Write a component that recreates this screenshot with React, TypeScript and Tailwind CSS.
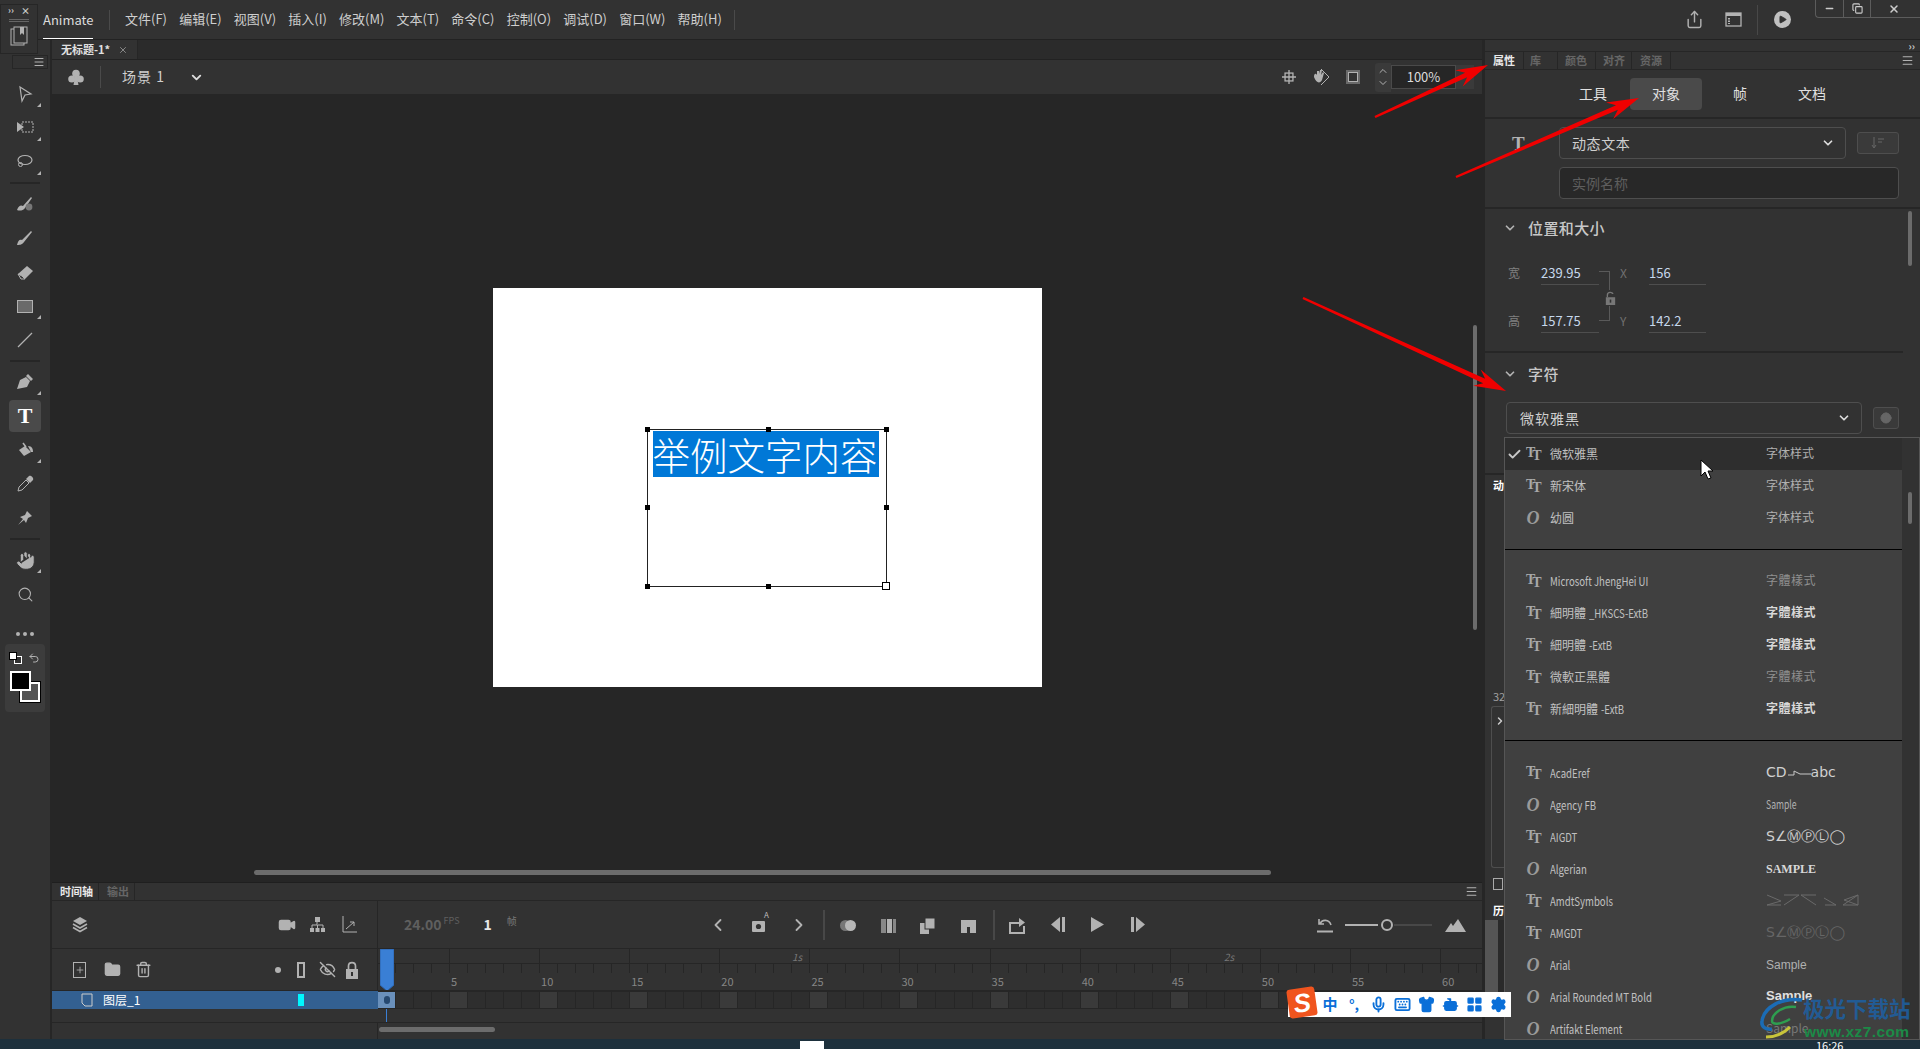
import React from "react";
import { Mic, Keyboard, Shirt, Bot, LayoutGrid, Settings, ChevronDown, ChevronUp, ChevronLeft, ChevronRight, Check, Plus, Trash2, Folder, Video, EyeOff, Play, Undo2, Globe, Share, Menu, Search, Hand, Minus, X, Copy } from "lucide-react";

const FONT = '"Noto Sans CJK SC", "Noto Sans", sans-serif';
const G = "#b2b2b2";

const Corner = () => (
  <span className="absolute right-[-7px] bottom-[-4px] w-0 h-0 border-l-[4px] border-l-transparent border-b-[4px] border-b-[#b2b2b2]" />
);

const Tool = ({ children, corner, active }: { children: React.ReactNode; corner?: boolean; active?: boolean }) => (
  <div className="w-[32px] h-[34px] flex items-center justify-center">
    <div className={`relative w-[32px] h-[32px] flex items-center justify-center rounded-[4px] ${active ? "bg-[#4a4a4a]" : ""}`}>
      <div className="relative w-[18px] h-[18px] flex items-center justify-center">
        {children}
        {corner && <Corner />}
      </div>
    </div>
  </div>
);

const S = ({ children, w = 18 }: { children: React.ReactNode; w?: number }) => (
  <svg width={w} height={w} viewBox="0 0 18 18" fill={G} stroke="none">{children}</svg>
);

const LockIcon = ({ c = G, open, w = 14, h = 18 }: { c?: string; open?: boolean; w?: number; h?: number }) => (
  <svg width={w} height={h} viewBox="0 0 14 18">
    <path d={open ? "M3 8 V5 C3 1 10 1 10 4" : "M3.5 8 V5 C3.5 0.5 10.5 0.5 10.5 5 V8"} fill="none" stroke={c} strokeWidth="1.7" />
    <rect x="1" y="8" width="12" height="10" fill={c} />
    <rect x="6" y="11" width="2" height="4" fill="#323232" />
  </svg>
);

const Divider = () => <div className="w-[30px] h-[2px] bg-[#262626] my-[3px]" />;

const Toolbar = () => (
  <div className="relative w-[50px] flex-none bg-[#323232] flex flex-col items-center pt-[21px]">
    <div className="absolute left-[12px] top-[15px] w-[36px] h-[14px] border border-[#262626] flex items-center justify-end pr-[2px]">
      <Menu size={12} color={G} />
    </div>
    <div className="mt-[16px]" />
    <Tool corner><S><path d="M4 2 L15 9 L9 10 L6 16 Z" fill="none" stroke={G} strokeWidth="1.2" /></S></Tool>
    <Tool corner><S w={22}><path d="M1 3 L8 8 L1 13 Z" /><rect x="6" y="3" width="11" height="10" fill="none" stroke={G} strokeDasharray="2 1" /></S></Tool>
    <Tool corner><S w={20}><ellipse cx="9" cy="7" rx="7" ry="4.5" fill="none" stroke={G} strokeWidth="1.2" /><circle cx="4.5" cy="11.5" r="2" fill="none" stroke={G} /></S></Tool>
    <Divider />
    <Tool><S w={20}><path d="M1 15 C3 10 5 10 7 11 L15 2 L16 3 L9 13 C7 16 3 16 1 15 Z" /><circle cx="13" cy="12" r="3.4" fill="#777" /></S></Tool>
    <Tool><S><path d="M1 16 C2 11 4 10 6 11 L15 2 L16 3 L8 13 C6 16 3 16 1 16 Z" /></S></Tool>
    <Tool><S w={20}><path d="M2 11 L11 3 L17 8 L9 16 L5 16 Z" /><path d="M2 11 L5 16 L9 16 L6 13 Z" fill="#3a3a3a" stroke={G} /></S></Tool>
    <Tool corner><div className="w-[16px] h-[13px] flex-none bg-[#6a6a6a] border border-[#b2b2b2]" /></Tool>
    <Tool><S><path d="M2 16 L16 2" stroke={G} strokeWidth="1.2" /></S></Tool>
    <Divider />
    <Tool corner><S><path d="M1 16 L4 7 L10 4 L14 8 L11 14 Z M10 3 L12 1 L17 6 L15 8 Z" /></S></Tool>
    <Tool active><span className="text-[22px] leading-none font-bold text-white" style={{ fontFamily: '"Liberation Serif", serif' }}>T</span></Tool>
    <Tool corner><S w={20}><path d="M3 9 L9 5 L15 11 L8 15 Z" /><path d="M7 2 L10 6" stroke={G} strokeWidth="1.5" /><path d="M12 5 C16 5 17 8 17 11 L15 11 Z" /></S></Tool>
    <Tool><S><path d="M2 16 L3 12 L10 5 L13 8 L6 15 Z" fill="none" stroke={G} /><path d="M10 4 L13 1 C15 0 18 3 17 5 L14 8 Z" /></S></Tool>
    <Tool><S><path d="M2 16 L7 10 L4 8 L9 6 L11 2 L16 7 L12 9 L10 14 L8 11 Z" /></S></Tool>
    <Divider />
    <Tool corner><Hand size={21} color="#323232" fill={G} strokeWidth={1.1} className="flex-none" /></Tool>
    <Tool><Search size={17} color={G} strokeWidth={1.5} /></Tool>
    <div className="flex gap-[3px] mt-[21px] mb-[8px]">
      <span className="w-[4px] h-[4px] rounded-full bg-[#b2b2b2]" />
      <span className="w-[4px] h-[4px] rounded-full bg-[#b2b2b2]" />
      <span className="w-[4px] h-[4px] rounded-full bg-[#b2b2b2]" />
    </div>
    <div className="relative w-[40px] h-[68px] rounded-[4px] bg-[#3c3c3c]">
      <span className="absolute left-[4px] top-[8px] w-[8px] h-[8px] bg-white border border-black z-10" />
      <span className="absolute left-[9px] top-[12px] w-[8px] h-[8px] bg-[#333] border border-white" />
      <Undo2 size={12} color={G} className="absolute right-[5px] top-[8px]" />
      <span className="absolute left-[15px] top-[38px] w-[20px] h-[20px] bg-[#555] border-2 border-white outline outline-1 outline-black" />
      <span className="absolute left-[5px] top-[27px] w-[21px] h-[20px] bg-black border-2 border-white z-10" />
    </div>
  </div>
);

const MENU = ["文件(F)", "编辑(E)", "视图(V)", "插入(I)", "修改(M)", "文本(T)", "命令(C)", "控制(O)", "调试(D)", "窗口(W)", "帮助(H)"];

const Header = () => (
  <div className="relative h-[40px] flex-none bg-[#323232] border-b border-[#222] flex items-center text-[13px] text-[#cfcfcf]">
    <div className="absolute left-0 top-[4px] w-[38px] h-[50px] bg-[#323232] border border-[#262626] z-20 flex flex-col items-center">
      <div className="w-full h-[10px] flex items-center justify-between px-[7px] text-[9px] leading-none text-[#ccc] font-bold"><span>››</span><span>×</span></div>
      <div className="w-[20px] h-[3px] mt-[4px] border-y border-[#666]" />
      <svg width="18" height="20" viewBox="0 0 18 20" className="mt-[4px]"><rect x="1" y="3" width="13" height="16" fill="none" stroke={G} /><rect x="4" y="1" width="13" height="16" fill="#323232" stroke={G} /><path d="M10 1 H14 V9 L12 7 L10 9 Z" fill={G} /></svg>
    </div>
    <div className="ml-[43px] h-full flex items-center w-[50px] border-b-[1px] border-white text-[13px] text-[#dcdcdc] pt-[2px]">Animate</div>
    <div className="ml-[16px] w-px h-[20px] bg-[#4a4a4a]" />
    <div className="ml-[15px] flex gap-[12.2px] whitespace-nowrap -mt-[2px]">
      {MENU.map((m) => <span key={m}>{m}</span>)}
    </div>
    <div className="ml-[12px] w-px h-[20px] bg-[#4a4a4a]" />
    <div className="ml-auto flex items-center mr-[129px]">
      <Share size={19} color={G} strokeWidth={1.8} />
      <svg width="17" height="15" viewBox="0 0 17 15" className="ml-[21px]"><rect x="1" y="1" width="15" height="13" fill="none" stroke={G} strokeWidth="1.3" /><rect x="1" y="1" width="15" height="3" fill={G} /><path d="M4 6 V12" stroke={G} strokeWidth="2" strokeDasharray="1.5 1" /></svg>
      <div className="ml-[15px] w-px h-[30px] bg-[#484848]" />
      <div className="ml-[16px] w-[17px] h-[17px] rounded-full bg-[#c0c0c0] flex items-center justify-center"><Play size={9} color="#323232" fill="#323232" /></div>
    </div>
    <div className="absolute right-0 top-0 w-[105px] h-[18px] border border-t-0 border-r-0 border-[#5c5c5c] rounded-bl-[4px] flex items-center">
      <div className="w-[28px] h-full border-r border-[#5c5c5c] flex items-center justify-center"><Minus size={11} color="#ccc" strokeWidth={3} /></div>
      <div className="w-[27px] h-full border-r border-[#5c5c5c] flex items-center justify-center"><Copy size={11} color="#ccc" strokeWidth={2.4} /></div>
      <div className="flex-1 flex items-center justify-center pr-[4px]"><X size={12} color="#ccc" strokeWidth={3} /></div>
    </div>
  </div>
);

const SceneBar = () => (
  <div className="h-[34px] flex-none bg-[#323232] flex items-center text-[#cfcfcf] relative z-0">
    <svg width="16" height="17" viewBox="0 0 16 17" className="ml-[16px]" fill={G}><circle cx="8" cy="4.5" r="3.8" /><circle cx="3.8" cy="10" r="3.6" /><circle cx="12.2" cy="10" r="3.6" /><path d="M7 8 H9 L10.5 16 H5.5 Z" /></svg>
    <div className="ml-[16px] w-px h-[22px] bg-[#4a4a4a]" />
    <span className="ml-[21px] text-[14px] tracking-[1px] -mt-[2px]">场景 1</span>
    <ChevronDown size={15} color="#ddd" strokeWidth={3} className="ml-[24px]" />
    <div className="ml-auto flex items-center">
      <svg width="14" height="14" viewBox="0 0 16 16"><rect x="3.5" y="3.5" width="9" height="9" fill="none" stroke={G} strokeWidth="1.5" /><path d="M8 0 V16 M0 8 H16" stroke={G} strokeWidth="1.5" /></svg>
      <svg width="18" height="18" viewBox="0 0 18 18" className="ml-[16px]"><path d="M9 1 L17 9 L9 17" fill="none" stroke={G} /><path d="M2 9 C2 5 4 5 5 7 L5 3 L7 3 L7 6 L8 2 L10 2 L9 7 L11 4 L12 5 L10 12 C8 16 4 15 2 9 Z" fill={G} /></svg>
      <div className="ml-[16px] w-[14px] h-[14px] bg-[#6a6a6a] p-[2px]"><div className="w-full h-full bg-[#323232] border border-[#b2b2b2]" /></div>
      <div className="ml-[15px] w-[16px] h-[29px] bg-[#3a3a3a] flex flex-col items-center justify-center rounded-l-[3px]">
        <ChevronUp size={12} color={G} /><ChevronDown size={12} color={G} />
      </div>
      <div className="w-[65px] h-[24px] bg-[#262626] border border-[#4a4a4a] flex items-center justify-center text-[13px] text-[#dcdcdc]">100%</div>
      <div className="w-[18px] h-[24px] bg-[#3a3a3a] mr-[10px]" />
    </div>
  </div>
);

const Canvas = () => (
  <div className="relative flex-1 min-h-0 bg-[#262626] flex items-center justify-center pb-[2px] pr-[2px]">
    <div className="relative w-[549px] h-[399px] bg-white">
      <div className="absolute left-[154px] top-[141px] w-[240px] h-[158px] border border-[#222]">
        <div className="ml-[5px] mt-[1px] w-[226px] h-[46px] bg-[#0078d7] text-white text-[37.5px] leading-[46px] whitespace-nowrap" style={{ fontWeight: 300 }}>举例文字内容</div>
        {[["-3px", "-3px"], ["118px", "-3px"], ["236px", "-3px"], ["-3px", "75px"], ["236px", "75px"], ["-3px", "154px"], ["118px", "154px"]].map(([l, t], i) => (
          <span key={i} className="absolute w-[5px] h-[5px] bg-black" style={{ left: l, top: t }} />
        ))}
        <span className="absolute left-[234px] top-[152px] w-[8px] h-[8px] bg-white border border-black" />
      </div>
    </div>
    <div className="absolute left-[202px] top-[776px] w-[1017px] h-[5px] rounded-full bg-[#6c6c6c]" />
    <div className="absolute left-[1421px] top-[231px] w-[4px] h-[305px] rounded-full bg-[#6c6c6c]" />
  </div>
);

const CELL = "w-[18.02px] flex-none";
const frames = Array.from({ length: 62 }, (_, i) => i);
const labels = Array.from({ length: 12 }, (_, i) => (i + 1) * 5);

const Timeline = () => (
  <div className="h-[157px] flex-none bg-[#323232] flex flex-col border-t border-[#1f1f1f] text-[#b2b2b2]">
    <div className="h-[18px] flex-none flex items-stretch border-b border-[#262626] text-[11px] font-bold">
      <div className="w-[47px] flex items-center pl-[8px] text-[#e8e8e8] border-r border-[#262626] bg-[#323232]">时间轴</div>
      <div className="w-[36px] flex items-center pl-[8px] text-[#666] border-r border-[#262626]">输出</div>
      <div className="ml-auto mr-[6px] flex items-center"><Menu size={13} color={G} /></div>
    </div>
    <div className="h-[48px] flex-none flex border-b border-[#262626]">
      <div className="w-[326px] flex-none flex items-center border-r border-[#262626]">
        <svg width="16" height="18" viewBox="0 0 16 18" className="ml-[20px]" fill={G}><path d="M8 1 L15 5 L8 9 L1 5 Z" /><path d="M1 8 L8 12 L15 8 M1 11.5 L8 15.5 L15 11.5" fill="none" stroke={G} strokeWidth="1.6" /></svg>
        <Video size={18} color={G} fill={G} className="ml-[190px]" />
        <svg width="15" height="16" viewBox="0 0 15 16" className="ml-[14px]" fill={G}><rect x="5" y="0" width="5" height="5" /><rect x="0" y="11" width="4" height="4" /><rect x="5.5" y="11" width="4" height="4" /><rect x="11" y="11" width="4" height="4" /><path d="M7 5 V8 H2 V11 M7.5 8 V11 M8 8 H13 V11" fill="none" stroke={G} /></svg>
        <svg width="15" height="17" viewBox="0 0 15 17" className="ml-[17px]"><path d="M1 0 V16 H15" fill="none" stroke={G} /><path d="M4 13 L12 6 M8 6 H12 V10" fill="none" stroke={G} /></svg>
      </div>
      <div className="flex-1 flex items-center relative">
        <span className="ml-[26px] text-[14px] text-[#5f5f5f] font-bold">24.00</span>
        <span className="ml-[2px] -mt-[8px] text-[9px] text-[#5f5f5f]">FPS</span>
        <span className="ml-[24px] text-[14px] font-bold text-[#e8e8e8]">1</span>
        <span className="ml-[15px] -mt-[9px] text-[10px] text-[#777]">帧</span>
        <ChevronLeft size={20} color={G} strokeWidth={2.2} className="absolute left-[330px]" />
        <svg width="16" height="17" viewBox="0 0 16 17" className="absolute left-[374px]" fill={G}><rect x="0" y="5" width="13" height="11" rx="1" /><circle cx="6.5" cy="10.5" r="2.6" fill="#323232" /></svg>
        <span className="absolute left-[386px] top-[10px] text-[8px] leading-none text-[#bbb]">A</span>
        <ChevronRight size={20} color={G} strokeWidth={2.2} className="absolute left-[411px]" />
        <div className="absolute left-[445px] top-[9px] w-[2px] h-[30px] bg-[#484848]" />
        <div className="absolute left-[462px] top-[19px] w-[16px] h-[11px]"><span className="absolute left-0 top-0 w-[11px] h-[11px] rounded-full bg-[#777]" /><span className="absolute left-[5px] top-0 w-[11px] h-[11px] rounded-full bg-[#b8b8b8]" /></div>
        <div className="absolute left-[503px] top-[18px] w-[15px] h-[14px] flex gap-[1px]"><span className="w-[5px] bg-[#888]" /><span className="w-[5px] bg-[#b2b2b2]" /><span className="w-[3px] bg-[#888]" /></div>
        <svg width="15" height="16" viewBox="0 0 15 16" className="absolute left-[542px] top-[17px]" fill={G}><rect x="0" y="5" width="9" height="11" /><rect x="5" y="0" width="10" height="11" stroke="#323232" /></svg>
        <svg width="15" height="13" viewBox="0 0 15 13" className="absolute left-[583px] top-[19px]"><path d="M0 0 H15 V13 H9 V7 H6 V13 H0 Z" fill={G} /></svg>
        <div className="absolute left-[615px] top-[9px] w-[2px] h-[30px] bg-[#484848]" />
        <svg width="17" height="16" viewBox="0 0 17 16" className="absolute left-[631px] top-[17px]"><path d="M1 4 V15 H15 V8 M1 5 H10" fill="none" stroke={G} strokeWidth="2" /><path d="M10 0 L16 4.5 L10 9 Z" fill={G} /></svg>
        <svg width="15" height="15" viewBox="0 0 15 15" className="absolute left-[673px] top-[16px]" fill={G}><path d="M9 0 V15 L0 7.5 Z" /><rect x="11" y="0" width="3" height="15" /></svg>
        <svg width="13" height="15" viewBox="0 0 13 15" className="absolute left-[713px] top-[16px]" fill={G}><path d="M0 0 L13 7.5 L0 15 Z" /></svg>
        <svg width="15" height="15" viewBox="0 0 15 15" className="absolute left-[752px] top-[16px]" fill={G}><rect x="1" y="0" width="3" height="15" /><path d="M6 0 L15 7.5 L6 15 Z" /></svg>
        <svg width="16" height="15" viewBox="0 0 16 15" className="absolute left-[939px] top-[17px]"><path d="M3 6 C5 1 12 1 14 7 M2 1 V6 H7" fill="none" stroke={G} strokeWidth="1.6" /><path d="M0 13.5 H16" stroke={G} strokeWidth="2" /></svg>
        <div className="absolute left-[967px] top-[23px] w-[33px] h-[2px] bg-[#b2b2b2]" />
        <div className="absolute left-[1003px] top-[18px] w-[12px] h-[12px] rounded-full border-2 border-[#b2b2b2]" />
        <div className="absolute left-[1016px] top-[23px] w-[38px] h-[2px] bg-[#484848]" />
        <svg width="21" height="13" viewBox="0 0 21 13" className="absolute left-[1067px] top-[18px]" fill={G}><path d="M0 13 L6 4 L8 7 L13 0 L21 13 Z" /></svg>
      </div>
    </div>
    <div className="h-[42px] flex-none flex border-b border-[#262626]">
      <div className="w-[326px] flex-none flex items-center border-r border-[#262626]">
        <div className="ml-[21px] w-[13px] h-[16px] border border-[#b2b2b2] flex items-center justify-center"><Plus size={10} color={G} /></div>
        <Folder size={17} color={G} fill={G} className="ml-[18px]" />
        <Trash2 size={17} color={G} className="ml-[14px]" />
        <span className="ml-[123px] w-[6px] h-[6px] rounded-full bg-[#b2b2b2]" />
        <span className="ml-[16px] w-[8px] h-[16px] border-2 border-[#b2b2b2]" />
        <EyeOff size={17} color={G} className="ml-[14px]" />
        <span className="ml-[9px] flex"><LockIcon /></span>
      </div>
      <div className="flex-1 min-w-0 overflow-hidden relative">
        <div className="h-[15px] flex border-b border-[#262626]">
          <div className="w-[71px] flex-none" />
          {labels.map((n) => (
            <div key={n} className="w-[90.1px] flex-none border-l border-[#262626]" />
          ))}
          <span className="absolute left-[414px] top-0 text-[10px] italic leading-[15px] text-[#777]">1s</span>
          <span className="absolute left-[846px] top-0 text-[10px] italic leading-[15px] text-[#777]">2s</span>
        </div>
        <div className="h-[9px] flex">
          {frames.map((i) => <div key={i} className={`${CELL} border-r border-[#262626]`} />)}
        </div>
        <div className="h-[17px] flex text-[11px] leading-[17px] text-[#858585]">
          <div className="w-[71px] flex-none" />
          {labels.map((n) => <div key={n} className="w-[90.1px] flex-none pl-[2px]">{n}</div>)}
        </div>
        <svg width="14" height="42" viewBox="0 0 14 42" className="absolute left-[2px] top-0"><path d="M0 0 H14 V36 L7 42 L0 36 Z" fill="#3a7fd5" stroke="#2c62a8" /></svg>
      </div>
    </div>
    <div className="h-[18px] flex-none flex">
      <div className="w-[326px] flex-none bg-[#336091] flex items-center text-[12px] text-white relative">
        <svg width="12" height="14" viewBox="0 0 12 14" className="ml-[29px]"><path d="M1 1 H11 V13 H4 L1 10 Z" fill="none" stroke="#ccc" /></svg>
        <span className="ml-[10px]">图层_1</span>
        <span className="absolute left-[246px] top-[3px] w-[6px] h-[12px] bg-[#00f7ff]" />
      </div>
      <div className="flex-1 min-w-0 flex overflow-hidden bg-[#2e2e2e] border-y border-[#262626]">
        {frames.map((i) => (
          <div key={i} className={`${CELL} border-r border-[#262626] ${i === 0 ? "bg-[#6a90bb] flex items-center justify-center" : (i + 1) % 5 === 0 ? "bg-[#3a3a3a]" : ""}`}>
            {i === 0 && <span className="w-[6px] h-[8px] rounded-full bg-[#26486f]" />}
          </div>
        ))}
      </div>
    </div>
    <div className="h-[14px] flex-none border-b border-[#262626] flex">
      <div className="ml-[334px] w-px h-full bg-[#3a7fd5]" />
    </div>
    <div className="flex-1 flex">
      <div className="w-[326px] flex-none border-r border-[#262626]" />
      <div className="mt-[4px] ml-px w-[116px] h-[5px] rounded-full bg-[#6c6c6c]" />
    </div>
  </div>
);

const Sec = ({ title }: { title: string }) => (
  <div className="flex items-center text-[15px] text-[#c8c8c8] font-medium leading-none">
    <ChevronDown size={14} color={G} strokeWidth={3} className="ml-[18px]" />
    <span className="ml-[11px] tracking-[0.4px]">{title}</span>
  </div>
);

const Field = ({ label, value }: { label: string; value: string }) => (
  <div className="flex items-center h-[16px]">
    <span className="w-[34px] pl-[1px] text-[12px] text-[#808080] translate-y-[4px]">{label}</span>
    <span className="w-[58px] text-[13px] text-[#c6d8ec] border-b border-[#4e4e4e] h-[24px] leading-[24px] translate-y-[4px]">{value}</span>
  </div>
);

const Serif = '"Liberation Serif", serif';
const IconT = () => (
  <span className="flex w-[14px] text-[#a8a8a8] text-[14px] leading-none font-bold" style={{ fontFamily: Serif }}><span>T</span><span className="-ml-[3px] mt-[3px]">T</span></span>
);
const IconO = () => (
  <span className="block w-[14px] text-center text-[#9a9a9a] text-[18px] leading-none italic font-bold" style={{ fontFamily: Serif }}>O</span>
);

const TC = '"Noto Sans CJK TC", sans-serif';
const DV = '"DejaVu Sans", sans-serif';
const L = ({ children }: { children: React.ReactNode }) => (
  <span className="inline-block origin-left scale-x-[0.8] text-[12px]">{children}</span>
);
const Row = ({ t, name, sample, check, hi }: { t: "T" | "O"; name: React.ReactNode; sample: React.ReactNode; check?: boolean; hi?: boolean }) => (
  <div className={`h-[32px] flex-none flex items-center text-[12px] text-[#c0c0c0] relative ${hi ? "bg-[#2e2e2e]" : ""}`}>
    {check && <Check size={15} color="#c8c8c8" strokeWidth={3} className="absolute left-[2px]" />}
    <div className="ml-[21px] w-[24px]">{t === "T" ? <IconT /> : <IconO />}</div>
    <div className="w-[216px] whitespace-nowrap">{name}</div>
    <div className="whitespace-nowrap text-[#b0b0b0] -translate-y-[1px]">{sample}</div>
  </div>
);

const Tw = ({ children, b }: { children: React.ReactNode; b?: boolean }) => (
  <span className={`text-[12px] tracking-[0.5px] ${b ? "font-bold text-[#d8d8d8]" : "text-[#8f8f8f]"}`} style={{ fontFamily: TC }}>{children}</span>
);
const Sym = ({ dim }: { dim?: boolean }) => (
  <span className={`text-[14px] ${dim ? "text-[#666]" : "text-[#d0d0d0]"}`} style={{ fontFamily: DV }}>S∠ⓂⓅⓁ◯</span>
);

const Dropdown = () => (
  <div className="absolute left-[19px] top-[397px] w-[416px] h-[603px] overflow-hidden bg-[#323232] border border-[#565656] flex z-10">
    <div className="w-[397px] flex-none bg-[#404040] flex flex-col" style={{ fontFamily: FONT }}>
      <Row t="T" hi check name="微软雅黑" sample="字体样式" />
      <Row t="T" name="新宋体" sample="字体样式" />
      <Row t="O" name="幼圆" sample="字体样式" />
      <div className="mt-[15px] h-px bg-black flex-none" />
      <div className="h-[15px] flex-none" />
      <Row t="T" name={<L>Microsoft JhengHei UI</L>} sample={<Tw>字體樣式</Tw>} />
      <Row t="T" name={<>細明體 <L>_HKSCS-ExtB</L></>} sample={<Tw b>字體樣式</Tw>} />
      <Row t="T" name={<>細明體 <L>-ExtB</L></>} sample={<Tw b>字體樣式</Tw>} />
      <Row t="T" name="微軟正黑體" sample={<Tw>字體樣式</Tw>} />
      <Row t="T" name={<>新細明體 <L>-ExtB</L></>} sample={<Tw b>字體樣式</Tw>} />
      <div className="mt-[15px] h-px bg-black flex-none" />
      <div className="h-[16px] flex-none" />
      <Row t="T" name={<L>AcadEref</L>} sample={<span className="text-[14px] text-[#d0d0d0] flex items-center" style={{ fontFamily: DV }}>CD<svg width="24" height="10" viewBox="0 0 24 10"><path d="M1 8 H7 V4 L13 7 H24" fill="none" stroke="#c8c8c8" /></svg>abc</span>} />
      <Row t="O" name={<L>Agency FB</L>} sample={<span className="inline-block origin-left scale-x-[0.72] text-[12px]">Sample</span>} />
      <Row t="T" name={<L>AIGDT</L>} sample={<Sym />} />
      <Row t="O" name={<L>Algerian</L>} sample={<span className="text-[12px] font-bold text-[#d8d8d8]" style={{ fontFamily: Serif }}>SAMPLE</span>} />
      <Row t="T" name={<L>AmdtSymbols</L>} sample={<svg width="94" height="12" viewBox="0 0 94 12" fill="none" stroke="#6a6a6a"><path d="M1 1 L15 7 L1 11 H15 M18 11 L33 1 H18 M50 1 H35 L50 11 M59 11 H70 L58 4 M77 11 L92 1 M92 11 L77 11 M92 1 V11 L78 6 L92 1" /></svg>} />
      <Row t="T" name={<L>AMGDT</L>} sample={<Sym dim />} />
      <Row t="O" name={<L>Arial</L>} sample={<span className="text-[12px]" style={{ fontFamily: '"Liberation Sans", sans-serif' }}>Sample</span>} />
      <Row t="O" name={<L>Arial Rounded MT Bold</L>} sample={<span className="text-[13px] font-bold text-[#e0e0e0]" style={{ fontFamily: '"Liberation Sans", sans-serif' }}>Sample</span>} />
      <Row t="O" name={<L>Artifakt Element</L>} sample={<span className="text-[12px] text-[#777]">Sample</span>} />
    </div>
    <div className="flex-1 relative">
      <div className="absolute left-[6px] top-[54px] w-[4px] h-[32px] rounded-full bg-[#6c6c6c]" />
    </div>
  </div>
);

const RightPanel = () => (
  <div className="relative w-[438px] flex-none bg-[#323232] border-l-[3px] border-[#262626] -ml-[2px] flex flex-col text-[#cfcfcf]">
    <div className="h-[12px] flex-none border-b border-[#262626] flex items-center justify-end pr-[5px] text-[10px] leading-none text-[#ccc] font-bold">››</div>
    <div className="h-[18px] flex-none flex items-stretch border-b border-[#262626] text-[11px] font-bold text-[#666] relative">
      <div className="w-[39px] pl-[8px] flex items-center text-[#e8e8e8] border-r border-[#262626]">属性</div>
      <div className="w-[34px] pl-[6px] flex items-center border-r border-[#262626]">库</div>
      <div className="w-[38px] pl-[7px] flex items-center border-r border-[#262626]">颜色</div>
      <div className="w-[36px] pl-[7px] flex items-center border-r border-[#262626]">对齐</div>
      <div className="w-[39px] pl-[8px] flex items-center border-r border-[#262626]">资源</div>
      <div className="ml-auto mr-[6px] flex items-center"><Menu size={13} color={G} /></div>
    </div>
    <div className="h-[49px] flex-none flex items-center text-[14px] text-[#e0e0e0] border-b-2 border-[#262626]">
      <span className="ml-[94px] w-[51px]">工具</span>
      <span className="w-[72px] h-[32px] rounded-[4px] bg-[#4a4a4a] flex items-center justify-center">对象</span>
      <span className="ml-[31px] w-[14px]">帧</span>
      <span className="ml-[51px]">文档</span>
    </div>
    <div className="h-[90px] flex-none border-b-2 border-[#262626] flex flex-col">
      <div className="flex items-center mt-[8px]">
        <span className="ml-[27px] w-[47px] text-[19px] leading-none font-bold text-[#b2b2b2]" style={{ fontFamily: Serif }}>T</span>
        <div className="w-[287px] h-[32px] rounded-[4px] border border-[#4e4e4e] flex items-center pl-[12px] text-[14px] tracking-[0.6px]">
          动态文本
          <ChevronDown size={14} color="#ddd" strokeWidth={3} className="ml-auto mr-[10px]" />
        </div>
        <div className="ml-[11px] w-[42px] h-[22px] rounded-[3px] border border-[#4e4e4e] bg-[#3a3a3a] flex items-center justify-center"><svg width="14" height="12" viewBox="0 0 14 12"><path d="M3 0 V10 M1 8 L3 11 L5 8 M7 2 H13 M7 5 H11" fill="none" stroke="#666" /></svg></div>
      </div>
      <div className="ml-[74px] mt-[8px] w-[340px] h-[32px] rounded-[4px] border border-[#4e4e4e] bg-[#282828] flex items-center pl-[12px] text-[14px] text-[#5e5e5e]">实例名称</div>
    </div>
    <div className="relative h-[144px] flex-none border-b-2 border-[#262626] w-[418px] flex flex-col pt-[11px]">
      <Sec title="位置和大小" />
      <div className="ml-[22px] mt-[26px] flex">
        <div className="flex flex-col gap-[32px]">
          <Field label="宽" value="239.95" />
          <Field label="高" value="157.75" />
        </div>
        <div className="w-[21px] relative flex flex-col items-start">
          <div className="w-[11px] h-[19px] mt-[10px] border-t border-r border-[#5a5a5a]" />
          <span className="ml-[6px] my-[1px] flex"><LockIcon c="#777" open w={11} h={14} /></span>
          <div className="w-[11px] h-[15px] border-b border-r border-[#5a5a5a]" />
        </div>
        <div className="flex flex-col gap-[32px]">
          <div className="flex items-center h-[16px]"><span className="w-[29px] text-[12px] text-[#707070] translate-y-[4px]">X</span><span className="w-[57px] h-[24px] leading-[24px] text-[13px] text-[#c6d8ec] border-b border-[#4e4e4e] translate-y-[4px]">156</span></div>
          <div className="flex items-center h-[16px]"><span className="w-[29px] text-[12px] text-[#707070] translate-y-[4px]">Y</span><span className="w-[57px] h-[24px] leading-[24px] text-[13px] text-[#c6d8ec] border-b border-[#4e4e4e] translate-y-[4px]">142.2</span></div>
        </div>
      </div>
    </div>
    <div className="h-[122px] flex-none border-b-[2px] border-[#262626] w-[418px] flex flex-col pt-[13px]">
      <Sec title="字符" />
      <div className="flex items-center mt-[21px] ml-[21px]">
        <div className="w-[356px] h-[32px] rounded-[4px] border border-[#4e4e4e] flex items-center pl-[13px] text-[14px] tracking-[1px]">
          微软雅黑
          <ChevronDown size={14} color="#ddd" strokeWidth={3} className="ml-auto mr-[10px]" />
        </div>
        <div className="ml-[11px] w-[26px] h-[22px] rounded-[3px] border border-[#4e4e4e] bg-[#3a3a3a] flex items-center justify-center"><Globe size={12} color="#666" fill="#666" /></div>
      </div>
    </div>
    <div className="flex-1 min-h-0 flex flex-col pl-[8px] text-[#c8c8c8] text-[11px]">
      <span className="mt-[2px] font-bold text-white">动</span>
      <span className="mt-[194px] text-[#a0a0a0]">32</span>
      <div className="mt-[2px] w-[14px] h-[162px] border border-r-0 border-[#4e4e4e] rounded-l-[3px] -ml-[2px] pt-[8px] pl-[2px]"><ChevronRight size={12} color="#ccc" strokeWidth={3} /></div>
      <div className="mt-[10px] w-[10px] h-[12px] border border-[#aaa]" />
      <span className="mt-[12px] font-bold text-white">历</span>
      <div className="-ml-[8px] mt-[1px] w-[19px] h-[76px] flex">
        <div className="w-[13px] h-full bg-[#555]" />
        <div className="w-[6px] h-full bg-[#2a2a2a]" />
      </div>
    </div>
    <div className="absolute right-[8px] top-[171px] w-[4px] h-[55px] rounded-full bg-[#6c6c6c]" />
    <Dropdown />
  </div>
);

const Arrow = ({ x1, y1, x2, y2 }: { x1: number; y1: number; x2: number; y2: number }) => {
  const dx = x2 - x1, dy = y2 - y1, Len = Math.hypot(dx, dy);
  const ux = dx / Len, uy = dy / Len, nx = -uy, ny = ux;
  const p = (a: number, b: number) => `${x1 + ux * a + nx * b},${y1 + uy * a + ny * b}`;
  return <polygon fill="#f00000" points={[p(0, 1.2), p(Len - 24, 2.4), p(Len - 32, 9), p(Len, 0), p(Len - 32, -9), p(Len - 24, -2.4), p(0, -1.2)].join(" ")} />;
};

const Overlays = () => (
  <>
    <svg width="1920" height="1049" className="absolute left-0 top-0 z-30 pointer-events-none" viewBox="0 0 1920 1049">
      <Arrow x1={1375} y1={117} x2={1488} y2={65} />
      <Arrow x1={1456} y1={177} x2={1639} y2={98} />
      <Arrow x1={1303} y1={298} x2={1506} y2={391} />
    </svg>
    <svg width="14" height="21" viewBox="0 0 14 21" className="absolute left-[1700px] top-[459px] z-30"><path d="M1 1 V17 L5 13 L8 20 L11 19 L8 12 L13 12 Z" fill="#fff" stroke="#000" /></svg>
    <div className="absolute left-[1288px] top-[992px] w-[223px] h-[25px] bg-white z-30 flex items-center pl-[30px] text-[#0a6fd8]" style={{ fontFamily: FONT }}>
      <div className="absolute left-[0px] top-[-4px] w-[28px] h-[29px] bg-[#f0541e] rounded-[3px] -rotate-[8deg] flex items-center justify-center text-white text-[26px] font-bold italic leading-none" style={{ fontFamily: '"Liberation Sans", sans-serif' }}>S</div>
      <span className="w-[24px] text-center text-[15px] font-bold">中</span>
      <span className="w-[24px] text-center text-[14px] font-bold">°,</span>
      <span className="w-[24px] flex justify-center"><Mic size={17} strokeWidth={2.6} /></span>
      <span className="w-[24px] flex justify-center"><Keyboard size={17} strokeWidth={2.6} /></span>
      <span className="w-[24px] flex justify-center"><Shirt size={17} fill="#0a6fd8" /></span>
      <span className="w-[24px] flex justify-center"><Bot size={17} fill="#0a6fd8" /></span>
      <span className="w-[24px] flex justify-center"><LayoutGrid size={17} fill="#0a6fd8" /></span>
      <span className="w-[24px] flex justify-center"><Settings size={17} fill="#0a6fd8" /></span>
    </div>
    <div className="absolute left-[1760px] top-[997px] z-30 flex items-start pointer-events-none">
      <svg width="44" height="42" viewBox="0 0 44 42" fill="none"><path d="M42 3 C22 0 4 10 2 24 C1 30 6 33 12 32" stroke="#1b6cb5" strokeWidth="3.5" /><path d="M36 10 C24 8 12 16 12 24 C12 28 20 28 30 22" stroke="#2e9e4f" strokeWidth="2.5" /><path d="M6 40 C16 40 24 36 30 30" stroke="#c8c43a" strokeWidth="3" /></svg>
      <div className="ml-[-1px] flex flex-col items-center leading-none" style={{ fontFamily: FONT }}>
        <span className="text-[21.5px] font-bold text-[#1f5f9e] opacity-90 h-[27px]">极光下载站</span>
        <span className="text-[15.5px] font-bold text-[#1b8a47] tracking-[0.4px]" style={{ fontFamily: '"Liberation Sans", sans-serif' }}>www.xz7.com</span>
      </div>
    </div>
  </>
);

export default function App() {
  return (
    <div className="relative w-[1920px] h-[1049px] overflow-hidden bg-[#323232] flex flex-col" style={{ fontFamily: FONT }}>
      <Header />
      <div className="flex-1 min-h-0 flex">
        <Toolbar />
        <div className="w-[2px] flex-none bg-[#262626]" />
        <div className="flex-1 min-w-0 flex flex-col">
          <div className="h-[20px] flex-none bg-[#2b2b2b] flex border-b border-[#222]">
            <div className="w-[86px] bg-[#323232] border-r border-[#262626] flex items-center pl-[9px] text-[11px] font-bold text-[#e0e0e0]">
              无标题-1*
              <X size={10} color="#999" className="ml-[8px]" />
            </div>
          </div>
          <SceneBar />
          <Canvas />
          <Timeline />
        </div>
        <RightPanel />
      </div>
      <div className="h-[10px] flex-none bg-[#1d303c] relative overflow-hidden">
        <span className="absolute left-[800px] top-[2px] w-[24px] h-[8px] bg-white" />
        <span className="absolute left-[1816px] top-[1px] text-[11px] leading-none text-white">16:26</span>
      </div>
      <Overlays />
    </div>
  );
}
